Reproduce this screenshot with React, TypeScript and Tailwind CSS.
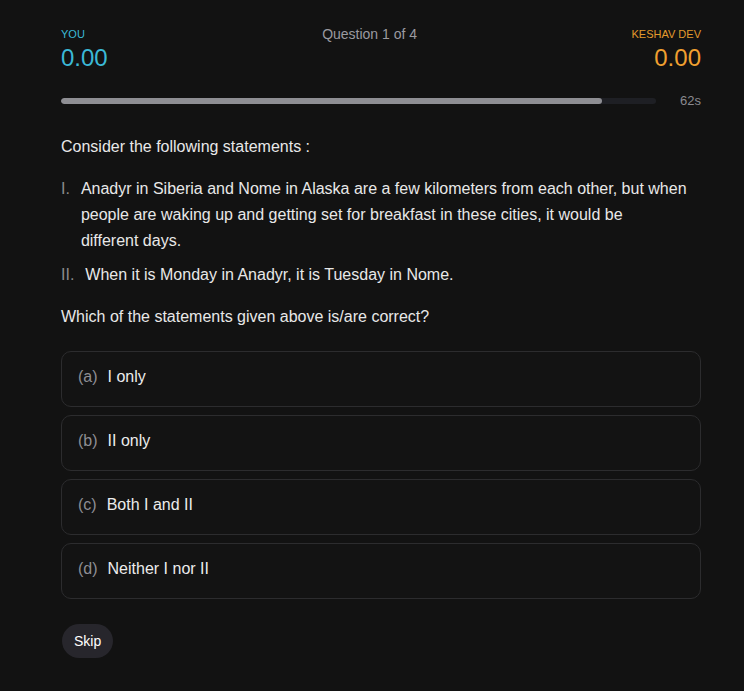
export default function App() {
  const options = [
    { key: "a", label: "I only" },
    { key: "b", label: "II only" },
    { key: "c", label: "Both I and II" },
    { key: "d", label: "Neither I nor II" },
  ];

  return (
    <div className="min-h-screen bg-[#121212] font-['Liberation_Sans',sans-serif] text-[#e8e8e8]">
      <div className="w-[640px] ml-[61px] pt-[26px] pb-8">
        {/* Scores */}
        <div className="flex justify-between items-start">
          <div>
            <p className="text-[11px] leading-4 text-[#3bb9d6]">YOU</p>
            <p className="mt-0.5 text-[24px] leading-7 text-[#3bb9d6]">0.00</p>
          </div>
          <p className="text-[14px] leading-4 text-[#9a9aa0]">Question 1 of 4</p>
          <div className="text-right">
            <p className="text-[11px] leading-4 text-[#e39a2c]">KESHAV DEV</p>
            <p className="mt-0.5 text-[24px] leading-7 text-[#f0a030]">0.00</p>
          </div>
        </div>

        {/* Timer */}
        <div className="mt-[21px] flex items-center">
          <div className="w-[595px] h-1.5 rounded-full bg-[#1e1f24] overflow-hidden">
            <div className="h-full w-[91%] rounded-full bg-[#8e8e93]" />
          </div>
          <span className="flex-1 text-right text-[13px] leading-4 text-[#8a8a90]">62s</span>
        </div>

        {/* Question */}
        <p className="mt-[26px] text-base leading-6">Consider the following statements :</p>
        <ol className="mt-[17px] flex flex-col gap-2">
          <li className="flex gap-[11px] leading-[26px]">
            <span className="text-[#8a8a8a]">I.</span>
            <span>
              Anadyr in Siberia and Nome in Alaska are a few kilometers from each other, but when
              people are waking up and getting set for breakfast in these cities, it would be
              <br />
              different days.
            </span>
          </li>
          <li className="flex gap-[11px] leading-[26px]">
            <span className="text-[#8a8a8a]">II.</span>
            <span>When it is Monday in Anadyr, it is Tuesday in Nome.</span>
          </li>
        </ol>
        <p className="mt-[17px] leading-6">Which of the statements given above is/are correct?</p>

        {/* Options */}
        <div className="mt-[22px] flex flex-col gap-2">
          {options.map((o) => (
            <button
              key={o.key}
              className="h-[56px] w-full rounded-[10px] border border-[#2c2c2e] bg-[#131313] px-4 pt-[13px] flex items-start gap-2.5 text-left"
            >
              <span className="leading-6 text-[#8e8e93]">({o.key})</span>
              <span className="leading-6 text-[#ececec]">{o.label}</span>
            </button>
          ))}
        </div>

        <button className="mt-[25px] ml-px h-[34px] px-3 rounded-full bg-[#27262c] text-sm font-medium text-white">
          Skip
        </button>
      </div>
    </div>
  );
}
